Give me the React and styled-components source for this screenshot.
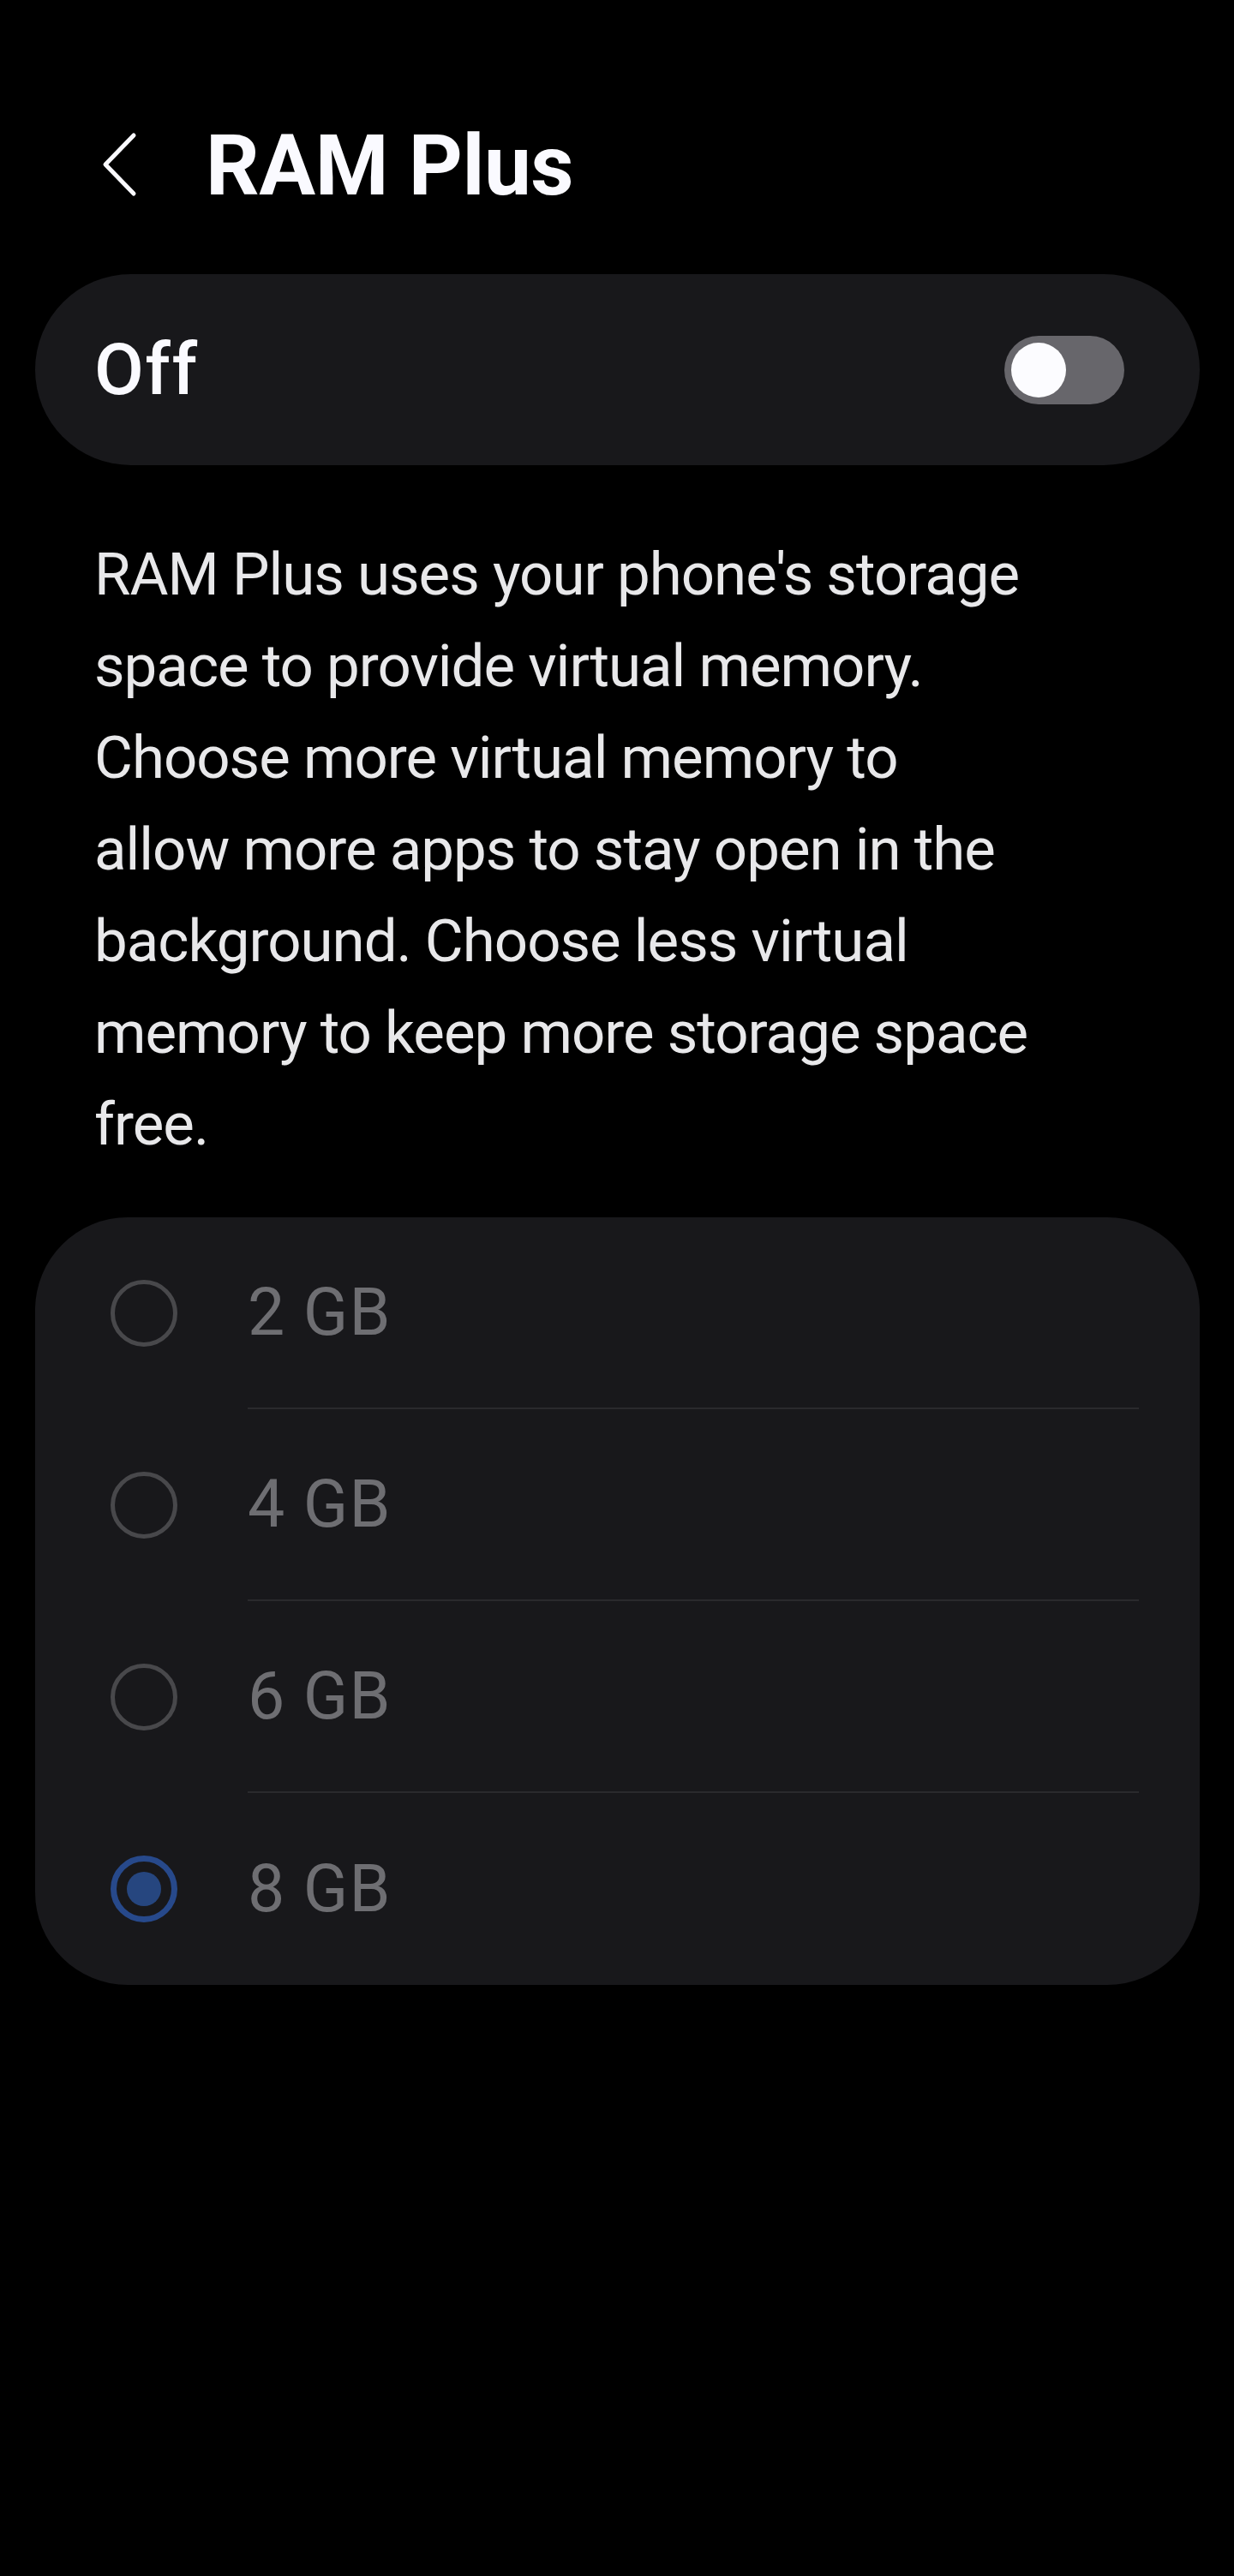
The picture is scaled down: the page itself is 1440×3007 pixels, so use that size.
import React from "react";
import styled, { createGlobalStyle } from "styled-components";

const Global = createGlobalStyle`
  html, body {
    margin: 0;
    padding: 0;
    background: #000;
  }
  body {
    min-height: 3007px;
    font-family: Roboto, "Noto Sans", "Liberation Sans", sans-serif;
    -webkit-font-smoothing: antialiased;
  }
`;

const Page = styled.div`
  min-height: 3007px;
  background: #000;
  padding: 134px 40px 0 41px;
  box-sizing: border-box;
  display: flex;
  flex-direction: column;
`;

const Header = styled.header`
  display: flex;
  align-items: center;
  height: 120px;
  padding-left: 75px;
`;

const BackButton = styled.button`
  display: flex;
  padding: 0;
  margin: 0;
  border: 0;
  background: none;
  width: 44px;
  height: 120px;
  cursor: pointer;
`;

const Title = styled.h1`
  margin: 0 0 0 80px;
  font-size: 98px;
  line-height: 120px;
  font-weight: 700;
  color: #fafaff;
  letter-spacing: -0.5px;
`;

const ToggleCard = styled.div`
  margin-top: 66px;
  height: 223px;
  border-radius: 112px;
  background: #18181b;
  display: flex;
  align-items: center;
  justify-content: space-between;
  padding: 0 88px 0 69px;
  box-sizing: border-box;
`;

const ToggleLabel = styled.span`
  font-size: 84px;
  font-weight: 500;
  color: #fafaff;
  letter-spacing: 1.5px;
`;

const Track = styled.div`
  width: 140px;
  height: 80px;
  border-radius: 40px;
  background: ${(p) => (p.$on ? "#3e6fd6" : "#67666b")};
  display: flex;
  align-items: center;
  justify-content: ${(p) => (p.$on ? "flex-end" : "flex-start")};
  padding: 0 8px;
  box-sizing: border-box;
`;

const Thumb = styled.div`
  width: 64px;
  height: 64px;
  border-radius: 50%;
  background: #fcfcff;
`;

const Description = styled.p`
  margin: 74px 0 0;
  padding-left: 69px;
  font-size: 69px;
  line-height: 107px;
  font-weight: 400;
  color: #e8e8ea;
  letter-spacing: -1px;
  white-space: nowrap;
`;

const OptionsCard = styled.div`
  margin-top: 55px;
  background: #18181b;
  border-radius: 108px;
  display: flex;
  flex-direction: column;
`;

const Option = styled.label`
  display: flex;
  align-items: center;
  height: 224px;
  padding-left: 88px;
  cursor: pointer;
`;

const Radio = styled.span`
  flex: none;
  width: 78px;
  height: 78px;
  border-radius: 50%;
  box-sizing: border-box;
  border: ${(p) => (p.$checked ? "7px solid #27498b" : "5px solid #48484b")};
  display: flex;
  align-items: center;
  justify-content: center;
`;

const Dot = styled.span`
  width: 40px;
  height: 40px;
  border-radius: 50%;
  background: #26467f;
`;

const OptionText = styled.span`
  flex: 1;
  align-self: stretch;
  margin-left: 82px;
  margin-right: 71px;
  display: flex;
  align-items: center;
  box-sizing: border-box;
  border-bottom: ${(p) => (p.$last ? "none" : "2px solid #2a2a2d")};
  font-size: 77px;
  font-weight: 400;
  color: #6e6e72;
  letter-spacing: 1.2px;
`;

const options = ["2 GB", "4 GB", "6 GB", "8 GB"];

export default function App() {
  const selected = "8 GB";
  return (
    <>
      <Global />
      <Page>
        <Header>
          <BackButton aria-label="Back">
            <svg width="44" height="120" viewBox="0 0 44 120" fill="none">
              <path
                d="M40 24 L7 58 L40 92"
                stroke="#fafaff"
                strokeWidth="5"
                strokeLinecap="round"
                strokeLinejoin="round"
              />
            </svg>
          </BackButton>
          <Title>RAM Plus</Title>
        </Header>

        <ToggleCard>
          <ToggleLabel>Off</ToggleLabel>
          <Track $on={false}>
            <Thumb />
          </Track>
        </ToggleCard>

        <Description>
          RAM Plus uses your phone's storage
          <br />
          space to provide virtual memory.
          <br />
          Choose more virtual memory to
          <br />
          allow more apps to stay open in the
          <br />
          background. Choose less virtual
          <br />
          memory to keep more storage space
          <br />
          free.
        </Description>

        <OptionsCard>
          {options.map((o, i) => (
            <Option key={o}>
              <Radio $checked={o === selected}>
                {o === selected && <Dot />}
              </Radio>
              <OptionText $last={i === options.length - 1}>{o}</OptionText>
            </Option>
          ))}
        </OptionsCard>
      </Page>
    </>
  );
}
